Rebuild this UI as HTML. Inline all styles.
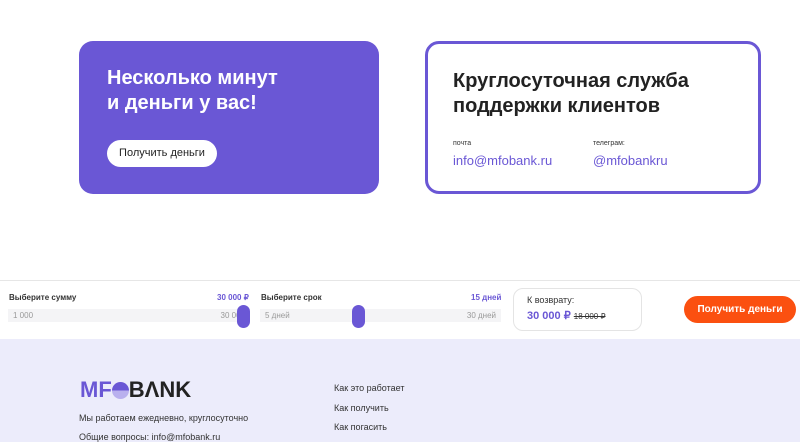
<!DOCTYPE html>
<html><head><meta charset="utf-8"><style>
*{margin:0;padding:0;box-sizing:border-box}
body{width:800px;height:442px;overflow:hidden;background:#fff;font-family:"Liberation Sans",sans-serif;position:relative}
.a{position:absolute}
.c1{left:79px;top:41px;width:300px;height:153px;background:#6a57d5;border-radius:14px}
.c2{left:425px;top:41px;width:336px;height:153px;border:3px solid #6a57d5;border-radius:14px}
.t{font-weight:bold;font-size:20px;line-height:25px}
.btn1{left:107px;top:140px;width:110px;height:27px;background:#fff;border-radius:14px;font-size:11px;color:#222;text-align:center;line-height:27px}
.bar{left:0;top:280px;width:800px;height:59px;border-top:1px solid #e6e6e6;background:#fff}
.lbl{font-size:8px;font-weight:bold;color:#333}
.track{height:13px;background:#f4f4f6;font-size:8px;color:#999;line-height:13px;padding:0 5px}
.thumb{width:13px;height:23px;background:#6a57d5;border-radius:7px}
.foot{left:0;top:339px;width:800px;height:103px;background:#ececfb}
.f{font-size:9px;color:#333}
</style></head><body>
<div class="a c1"></div>
<div class="a t" style="left:107px;top:66px;color:#fff">Несколько минут<br>и деньги у вас!</div>
<div class="a btn1">Получить деньги</div>
<div class="a c2"></div>
<div class="a t" style="left:453px;top:69px;color:#222">Круглосуточная служба<br>поддержки клиентов</div>
<div class="a" style="left:453px;top:140px;font-size:7px;color:#333">почта</div>
<div class="a" style="left:453px;top:153px;font-size:13px;color:#6a57d5">info@mfobank.ru</div>
<div class="a" style="left:593px;top:140px;font-size:7px;color:#333">телеграм:</div>
<div class="a" style="left:593px;top:153px;font-size:13px;color:#6a57d5">@mfobankru</div>
<div class="a bar"></div>
<div class="a lbl" style="left:9px;top:293px">Выберите сумму</div>
<div class="a lbl" style="left:217px;top:293px;color:#6a57d5">30 000 ₽</div>
<div class="a track" style="left:8px;top:309px;width:242px">1 000<span style="float:right">30 000</span></div>
<div class="a thumb" style="left:237px;top:305px"></div>
<div class="a lbl" style="left:261px;top:293px">Выберите срок</div>
<div class="a lbl" style="left:471px;top:293px;color:#6a57d5">15 дней</div>
<div class="a track" style="left:260px;top:309px;width:241px">5 дней<span style="float:right">30 дней</span></div>
<div class="a thumb" style="left:352px;top:305px"></div>
<div class="a" style="left:513px;top:288px;width:129px;height:43px;border:1px solid #e4e4e4;border-radius:10px"></div>
<div class="a" style="left:527px;top:295px;font-size:9px;color:#333">К возврату:</div>
<div class="a" style="left:527px;top:309px;font-size:11px;font-weight:bold;color:#6a57d5">30 000 ₽ <span style="font-size:8px;font-weight:normal;color:#333;text-decoration:line-through">18 000 ₽</span></div>
<div class="a" style="left:684px;top:296px;width:112px;height:27px;background:#fb5010;border-radius:14px;color:#fff;font-size:10px;font-weight:bold;text-align:center;line-height:27px">Получить деньги</div>
<div class="a foot"></div>
<div class="a" style="left:80px;top:378px;font-size:22px;font-weight:bold;letter-spacing:0px;line-height:24px"><span style="color:#6a57d5">MF</span><span style="display:inline-block;width:17px;height:17px;border-radius:50%;background:linear-gradient(#6a57d5 50%,#b9b0ee 50%);vertical-align:-2px"></span><span style="color:#222">BΛNK</span></div>
<div class="a f" style="left:79px;top:413px">Мы работаем ежедневно, круглосуточно</div>
<div class="a f" style="left:79px;top:432px">Общие вопросы: info@mfobank.ru</div>
<div class="a f" style="left:334px;top:383px">Как это работает</div>
<div class="a f" style="left:334px;top:403px">Как получить</div>
<div class="a f" style="left:334px;top:422px">Как погасить</div>
</body></html>
